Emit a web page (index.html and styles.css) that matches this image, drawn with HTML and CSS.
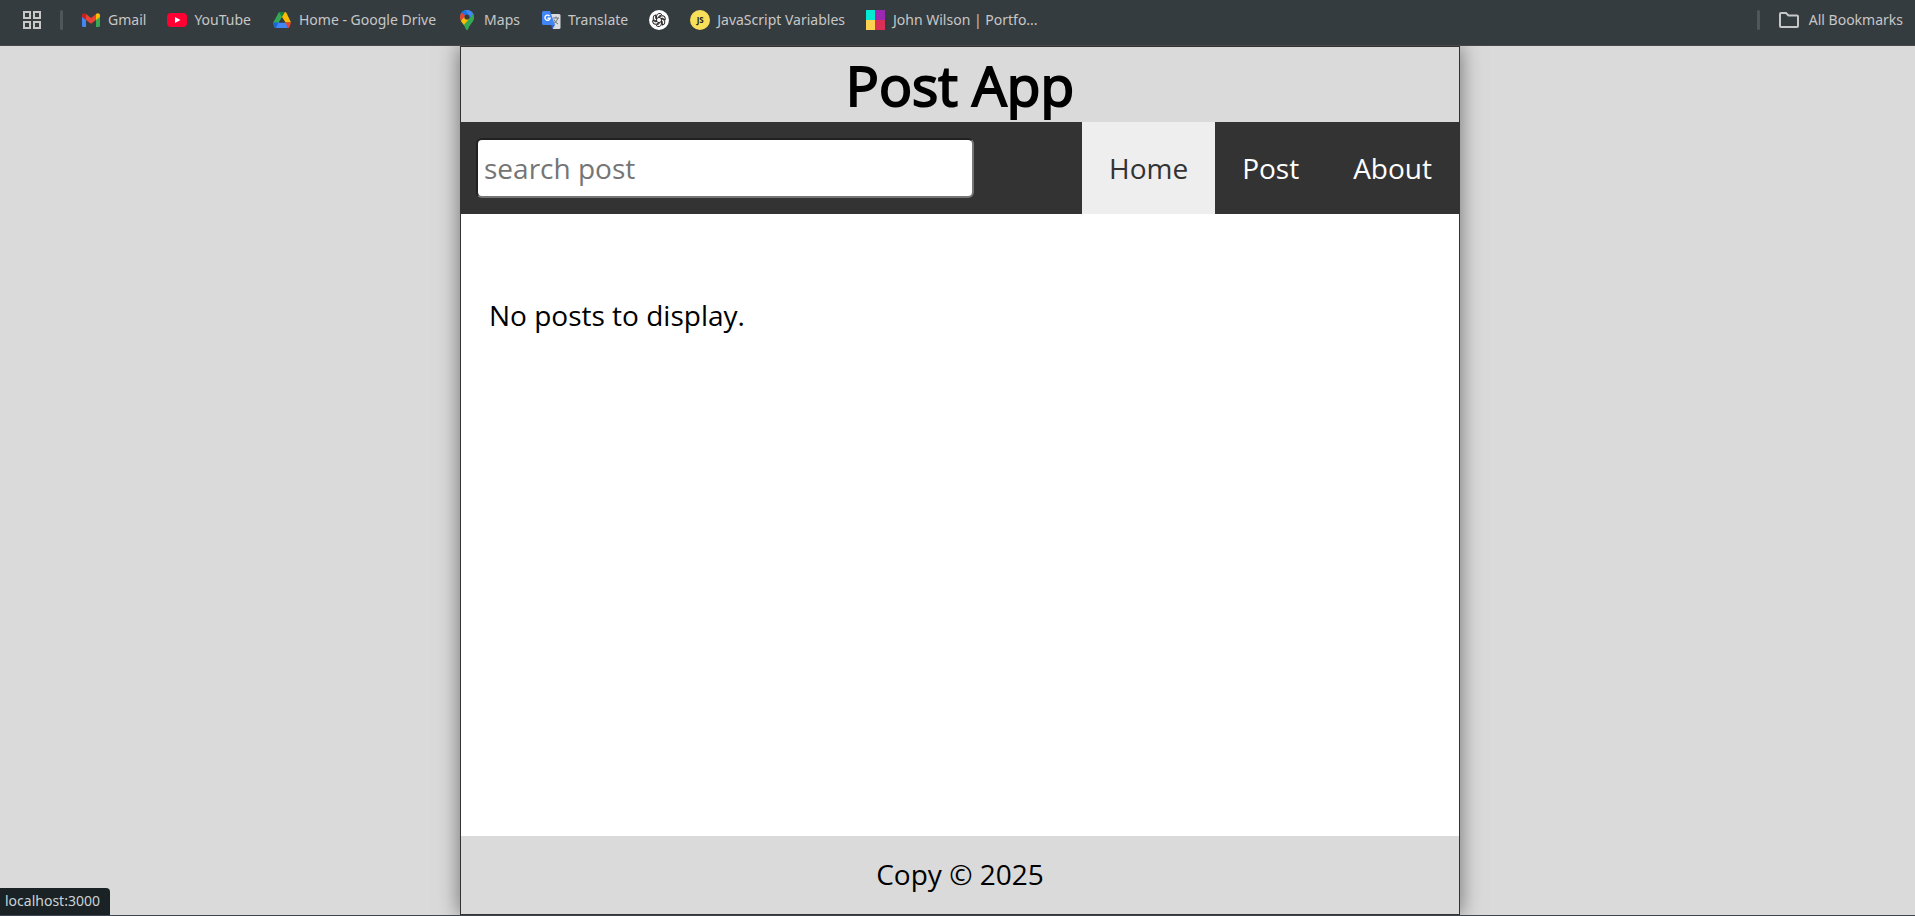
FILE: index.html
```html
<!DOCTYPE html>
<html lang="en">
<head>
<meta charset="utf-8">
<meta name="viewport" content="width=device-width, initial-scale=1">
<title>Post App</title>
<link rel="stylesheet" href="styles.css">
</head>
<body>
<nav class="bookmarks" aria-label="Bookmarks">
  <button class="apps" type="button" aria-label="Apps">
    <svg class="icon" viewBox="0 0 20 20" fill="none" stroke="#c7c7c7" stroke-width="2"><path d="M2 2h6v6H2zM12 2h6v6h-6zM2 12h6v6H2zM12 12h6v6h-6z"/></svg>
  </button>
  <span class="divider"></span>
  <a class="bookmark" href="#"><svg class="icon" viewBox="0 0 20 20"><path fill="#4285f4" d="M1 6v9.500q0 1.500 1.500 1.500H5V8.500z"/><path fill="#34a853" d="M15 8.500V17h2.500q1.500 0 1.500-1.500V6z"/><path fill="#c5221f" d="M1 7V5.500C1 3.300 3.200 2.600 5 4v6z"/><path fill="#fbbc04" d="M15 10V4c1.800-1.400 4-.7 4 1.500V7z"/><path fill="#ea4335" d="M5 4l5 4 5-4v6l-5 3.800L5 10z"/></svg><span>Gmail</span></a>
  <a class="bookmark" href="#"><svg class="icon" viewBox="0 0 20 20"><rect y="3" width="20" height="14" rx="4" fill="#ff0033"/><path d="M8 7l5.500 3L8 13z" fill="#fff"/></svg><span>YouTube</span></a>
  <a class="bookmark" href="#"><svg class="icon" viewBox="0 0 20 20"><path fill="#34a853" d="M7 2h6l-3 5.500-4.500 7L4 18q-1 0-1.500-1L1 13z"/><path fill="#188038" d="M7 2h6l-3 5z"/><path fill="#fbbc04" d="M13 2q1 0 1.500 1L19 12.500H13.500L10 7z"/><path fill="#4285f4" d="M4.500 12.500h9.500L16 18H4q-1 0-1.500-1z"/><path fill="#1967d2" d="M1 12.500h5.500L4 18q-1 0-1.500-1z"/><path fill="#ea4335" d="M13.500 12.500H19L17.500 17q-.5 1-1.500 1z"/><path fill="#353c3f" d="M10 7.500l3 5H7z"/></svg><span>Home - Google Drive</span></a>
  <a class="bookmark" href="#"><svg class="icon" viewBox="0 0 20 20"><defs><clipPath id="pin"><path d="M10 0a7 7 0 0 1 7 7c0 5-4.500 7-6 12q-1 2-2 0C7.500 14 3 12 3 7a7 7 0 0 1 7-7z"/></clipPath></defs><g clip-path="url(#pin)"><path fill="#34a853" d="M0 0h20v20H0z"/><path fill="#4285f4" d="M5 0h15L8 14 5 9z"/><path fill="#1a73e8" d="M2 0h7l2 5-3 3-6-5z"/><path fill="#ea4335" d="M0 2l4 0 5 4-6 7H0z"/><path fill="#fbbc04" d="M3 12l6-7 4 4-7 8z"/><path fill="#34a853" d="M6 16l11-13v17H6z"/></g><circle cx="10" cy="7" r="2.600" fill="#353c3f"/></svg><span>Maps</span></a>
  <a class="bookmark" href="#"><svg class="icon" viewBox="0 0 20 20"><path fill="#dadce0" d="M9 4h9q1.500 0 1.500 1.500v12q0 1.500-1.500 1.500h-6z"/><path stroke="#70757a" fill="none" d="M12 8h6M15 6.500V8M17 8q-1 4-5 6M13 9.500q1 3 4 4.500"/><path fill="#3367d6" d="M10 15h4l-2.500 4z"/><path fill="#4285f4" d="M2.500 1H9l5 14H2.500Q1 15 1 13.500v-11Q1 1 2.500 1z"/><path stroke="#fff" stroke-width="1.400" fill="none" d="M8.500 6a2.600 2.600 0 1 0 .6 2.200H6.500"/></svg><span>Translate</span></a>
  <a class="bookmark" href="#" aria-label="ChatGPT"><svg class="icon" viewBox="0 0 20 20"><circle cx="10" cy="10" r="10" fill="#fff"/><g fill="none" stroke="#222" stroke-width="1"><g id="arms"><path id="arm" d="M7.600 11.500V6a2.900 2.900 0 0 1 5.200-1.400L9.500 6.500"/><use href="#arm" transform="rotate(60 10 10)"/><use href="#arm" transform="rotate(120 10 10)"/></g><use href="#arms" transform="rotate(180 10 10)"/></g></svg></a>
  <a class="bookmark" href="#"><span class="icon js-badge" aria-hidden="true">JS</span><span>JavaScript Variables</span></a>
  <a class="bookmark" href="#"><svg class="icon" viewBox="0 0 20 20" shape-rendering="crispEdges"><path fill="#00ead3" d="M0 0h10v10H0z"/><path fill="#9c27b0" d="M9 0h10v10H9z"/><path fill="#ffd151" d="M0 10h9v10H0z"/><path fill="#dc2f55" d="M9 10h10v10H9z"/></svg><span>John Wilson | Portfo...</span></a>
  <span class="divider divider-end"></span>
  <a class="bookmark" href="#"><svg class="icon" viewBox="0 0 20 20" fill="none" stroke="#c7c7c7" stroke-width="2"><path d="M1 4q0-1 1-1h5l2.500 2.500H18q1 0 1 1V16q0 1-1 1H2q-1 0-1-1z"/></svg><span>All Bookmarks</span></a>
</nav>
<div class="page">
  <div class="app">
    <header class="header"><h1 class="title">Post App</h1></header>
    <nav class="nav" aria-label="Main">
      <form class="search">
        <input class="search-input" type="text" placeholder="search post" aria-label="Search posts">
      </form>
      <ul class="links">
        <li><a class="link link-active" href="#">Home</a></li>
        <li><a class="link" href="#">Post</a></li>
        <li><a class="link" href="#">About</a></li>
      </ul>
    </nav>
    <main class="main"><p>No posts to display.</p></main>
    <footer class="footer"><p>Copy &copy; 2025</p></footer>
  </div>
</div>
<div class="status">localhost:3000</div>
</body>
</html>
```
FILE: styles.css
```css
* { box-sizing: border-box; margin: 0; padding: 0; }

body {
  display: flex;
  flex-direction: column;
  min-height: 100vh;
  border-bottom: 1px solid #3f4650;
  background: #dadada;
  font: 28px/38px "Open Sans", sans-serif;
  color: #000;
}

a { color: inherit; text-decoration: none; }
ul { list-style: none; }
input { font: inherit; }

.bookmarks {
  position: relative;
  z-index: 1;
  display: flex;
  align-items: center;
  gap: 21px;
  height: 46px;
  padding: 0 12px 6px 22px;
  border-bottom: 1px solid #484848;
  background: #353c3f;
  color: #c7c7c7;
  font: 14px/20px "Noto Sans", sans-serif;
  white-space: nowrap;
}

.apps { display: flex; border: 0; background: none; }
.icon { flex: none; width: 20px; height: 20px; }
.bookmark { display: flex; align-items: center; gap: 7px; }
.divider { width: 3px; height: 20px; margin: 0 -3px; border-radius: 2px; background: #50575a; }
.divider-end { margin: 0 -2px 0 auto; }
.divider-end + .bookmark { gap: 10px; }

.js-badge {
  border-radius: 50%;
  background: #f7df5a;
  color: #222;
  font: bold 8px/20px "Open Sans", sans-serif;
  text-align: center;
}

.page {
  display: flex;
  flex: 1;
  justify-content: center;
  padding-left: 5px;
  overflow: hidden;
}

.app {
  display: flex;
  flex-direction: column;
  width: 100%;
  max-width: 1000px;
  border: 1px solid #333;
  background: #fff;
  box-shadow: 0 0 20px rgba(0, 0, 0, 0.5);
}

.header { background: #dadada; text-align: center; }

.title {
  font-size: 55px;
  font-weight: 400;
  line-height: 75px;
  -webkit-text-stroke: 2px #000;
}

.nav {
  display: flex;
  justify-content: space-between;
  background: #333;
}

.search { flex: 0 1 513px; padding: 16px 0 16px 15px; }

.search-input {
  display: block;
  width: 100%;
  height: 60px;
  padding: 0 6px;
  border: 2px inset #767676;
  border-radius: 6px;
}

.search-input::placeholder { color: #757575; }
.links { display: flex; }

.link {
  display: flex;
  align-items: center;
  height: 100%;
  padding: 0 27px;
  color: #fff;
}

.link-active { background: #eee; color: #333; }
.main { flex: 1; padding: 82px 28px; }
.footer { padding: 19px 20px 21px; background: #dadada; text-align: center; }

.status {
  position: fixed;
  bottom: 1px;
  left: 0;
  padding: 3px 10px 4px 5px;
  border-top-right-radius: 4px;
  background: #1b2225;
  color: #c8d3d8;
  font: 14px/20px "Noto Sans", sans-serif;
}
```
